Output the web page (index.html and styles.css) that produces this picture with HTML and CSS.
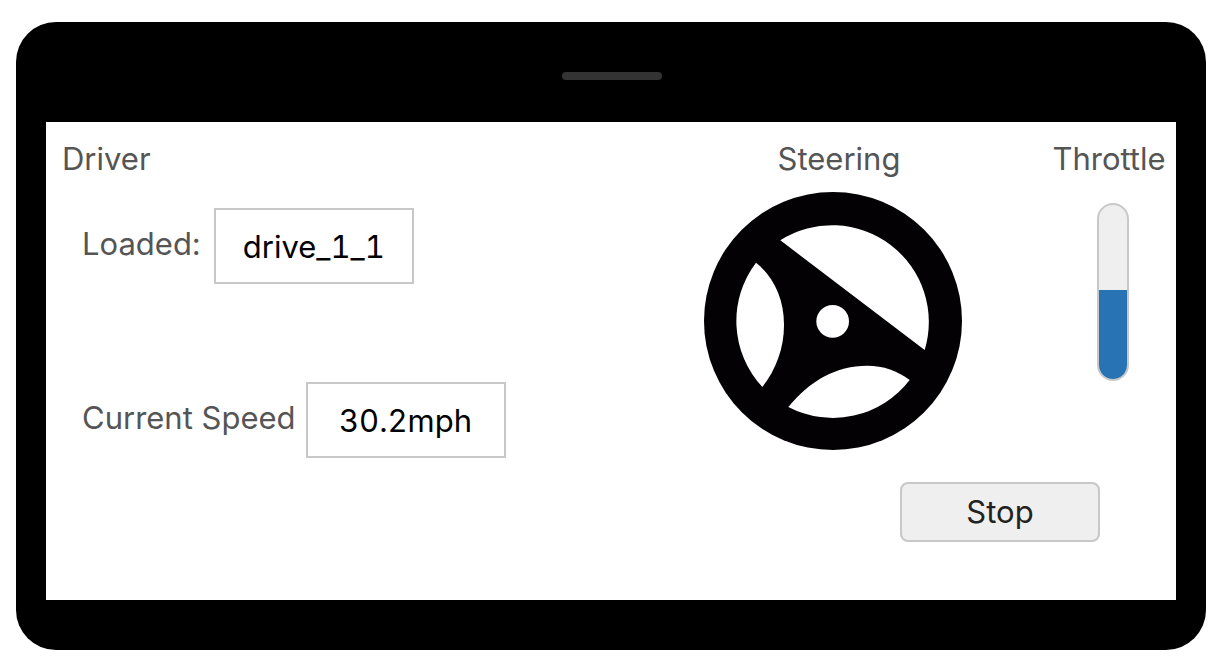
FILE: index.html
```html
<!DOCTYPE html>
<html lang="en">
<head>
<meta charset="utf-8">
<meta name="viewport" content="width=device-width, initial-scale=1">
<title>Driver</title>
<link rel="stylesheet" href="styles.css">
</head>
<body>
<div class="device">
  <div class="bezel"><span class="speaker"></span></div>
  <main class="screen">
    <section class="driver">
      <h1 class="heading">Driver</h1>
      <div class="field field-loaded">
        <label for="loaded">Loaded:</label>
        <input class="value" id="loaded" type="text" value="drive_1_1" readonly>
      </div>
      <div class="field field-speed">
        <label for="speed">Current Speed</label>
        <input class="value" id="speed" type="text" value="30.2mph" readonly>
      </div>
    </section>
    <section class="controls">
      <div class="gauges">
        <div class="steering">
          <h2 class="heading">Steering</h2>
          <svg class="wheel" viewBox="41 37 774 774" role="img" aria-label="Steering wheel">
            <circle cx="428" cy="424" r="387" fill="#030104"/>
            <g fill="#fff">
              <path d="M270 182A290 290 0 0 1 703 511Z"/>
              <path d="M197 249C249 291 281 356 281 436C281 506 257 569 216 622A290 290 0 0 1 197 249Z"/>
              <path d="M294 682C358 603 438 558 530 558C580 558 621 573 658 601A290 290 0 0 1 294 682Z"/>
              <circle cx="427" cy="425" r="49"/>
            </g>
          </svg>
        </div>
        <div class="throttle">
          <h2 class="heading" id="throttle-label">Throttle</h2>
          <div class="bar" role="meter" aria-labelledby="throttle-label" aria-valuemin="0" aria-valuemax="100" aria-valuenow="50">
            <div class="fill" style="height: 51%"></div>
          </div>
        </div>
      </div>
      <button class="stop" type="button">Stop</button>
    </section>
  </main>
</div>
</body>
</html>
```
FILE: styles.css
```css
* {
  box-sizing: border-box;
}

body {
  margin: 0;
  padding: 22px 10px 22px 16px;
  background: #fff;
  color: #555;
  font: 31px/38px Inter, "Liberation Sans", sans-serif;
}

.device {
  padding: 0 30px 50px;
  border-radius: 40px;
  background: #000;
}

.bezel {
  display: flex;
  justify-content: center;
  padding: 50px 0 42px 2px;
}

.speaker {
  width: 100px;
  height: 8px;
  border-radius: 4px;
  background: #333;
}

.screen {
  display: flex;
  justify-content: space-between;
  padding: 18px 10px 58px 16px;
  background: #fff;
}

.heading {
  margin: 0;
  font: inherit;
}

.field {
  display: flex;
  align-items: center;
  padding-left: 20px;
}

.field label {
  padding-bottom: 4px;
}

.field-loaded {
  gap: 13px;
  margin-top: 30px;
}

.field-speed {
  gap: 10px;
  margin-top: 98px;
}

.value {
  width: 200px;
  height: 76px;
  padding: 0;
  border: 2px solid #c8c8c8;
  border-radius: 0;
  background: #fff;
  color: #000;
  font: inherit;
  font-variant-numeric: tabular-nums;
  text-align: center;
}

.controls {
  display: flex;
  flex-direction: column;
}

.gauges {
  display: flex;
  gap: 78px;
}

.steering {
  display: flex;
  flex-direction: column;
  width: 270px;
  text-align: center;
}

.wheel {
  width: 258px;
  height: 258px;
  margin-top: 14px;
}

.throttle {
  display: flex;
  flex-direction: column;
  align-items: center;
  width: 114px;
}

.bar {
  display: flex;
  align-items: flex-end;
  width: 32px;
  height: 178px;
  margin: 25px 0 0 8px;
  overflow: hidden;
  border: 2px solid #c8c8c8;
  border-radius: 16px;
  background: #efefef;
}

.fill {
  width: 100%;
  background: #2873b4;
}

.stop {
  align-self: flex-end;
  width: 200px;
  height: 60px;
  margin: 32px 66px 0 0;
  padding: 0;
  border: 2px solid #c8c8c8;
  border-radius: 8px;
  background: #efefef;
  color: #222;
  font: inherit;
}
```
